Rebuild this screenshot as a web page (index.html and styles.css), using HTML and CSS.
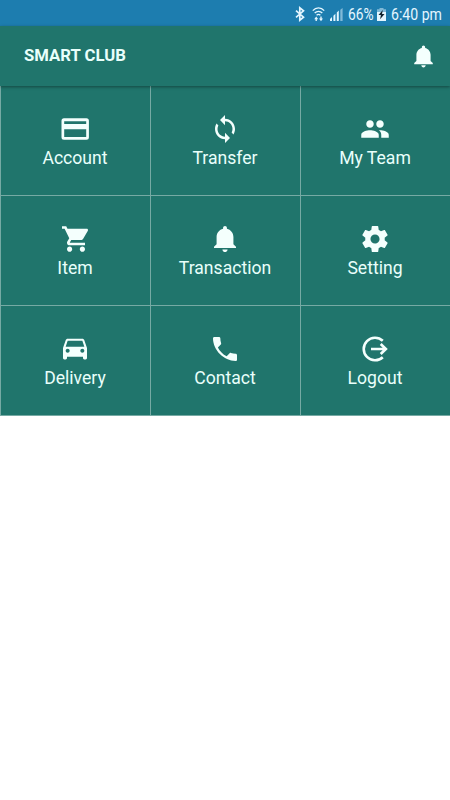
FILE: index.html
```html
<!doctype html>
<html lang="en">
  <head>
    <meta charset="UTF-8" />
    <meta name="viewport" content="width=device-width, initial-scale=1.0" />
    <title>Smart Club</title>
    <link rel="stylesheet" href="styles.css">
  </head>

  <body>
    <!-- Status bar -->
    <div class="status-bar">
      <svg class="bluetooth" width="10" height="16" viewBox="0 0 10 16">
        <path d="M1 4.700l7.500 6.500-3.700 3V1.800l3.700 3-7.500 6.500" />
      </svg>
      <svg class="wifi" width="13" height="15" viewBox="0 0 13 15">
        <path class="line" d="M.8 3.7C4-.1 9-.1 12.2 3.7M2.7 6c2.2-2.3 5.4-2.3 7.6 0M4.6 8.2c1.2-1.1 2.6-1.1 3.8 0" />
        <path d="M2.200 12.200l2-2.600 2 2.600zM7 11.600h4l-2 2.600zM3.500 12h1.400v2H3.500zM8.300 9.600h1.400v2.400H8.300z" />
      </svg>
      <svg class="signal" width="13" height="13" viewBox="0 0 13 13">
        <path d="M0 13v-2l2-2v4zM3.4 13V7.8l2-2V13zM6.8 13V4.6l2-2V13z" />
        <path class="faint" d="M10.3 13V1.8L12.6 0v13z" />
      </svg>
      <span class="battery-level">66%</span>
      <svg class="battery" width="9" height="13" viewBox="0 0 9 13">
        <path class="faint" d="M2.5 0h4v1.3H9V5H0V1.3h2.5z" />
        <path d="M0 4h9v9H0z" />
        <path class="bolt" d="M5.8 2L1.5 7h2.4l-.8 4.2L7.5 6H5z" />
      </svg>
      <span class="time">6:40 pm</span>
    </div>

    <!-- Header -->
    <header class="toolbar">
      <h1 class="title">SMART CLUB</h1>
      <svg class="icon" viewBox="0 0 512 512"><use href="#bell" /></svg>
    </header>

    <!-- Menu -->
    <main class="menu">
      <div class="item">
        <svg class="icon" viewBox="0 0 32 32">
          <path fill-rule="evenodd" d="M5 5.3h22.4a2.5 2.5 0 0 1 2.5 2.5v16.4a2.5 2.5 0 0 1-2.5 2.5H5a2.5 2.5 0 0 1-2.5-2.5V7.800A2.500 2.500 0 0 1 5 5.300zM5.200 8.200v2.800h22V8.200zM5.200 16.200v7.700h22v-7.700z" />
        </svg>
        <span>Account</span>
      </div>
      <div class="item">
        <svg class="icon" viewBox="0 0 512 512">
          <path d="M256 93.09V32l-80 81.454 80 81.456v-61.093c65.996 0 120 54.982 120 122.183 0 20.363-5 39.714-14.004 57.016L391 342.547c15.996-25.457 25-54.988 25-86.547 0-89.599-72.002-162.91-160-162.91zm0 285.094c-66.001 0-120-54.988-120-122.184 0-20.363 5-39.709 13.999-57.02L121 169.454C104.999 193.89 96 224.436 96 256c0 89.599 72.002 162.91 160 162.91V480l80-81.453-80-81.457v61.094z" />
        </svg>
        <span>Transfer</span>
      </div>
      <div class="item">
        <svg class="icon" viewBox="-.8 -.8 25.600 25.600">
          <path d="M16 11c1.660 0 2.990-1.340 2.990-3S17.660 5 16 5s-3 1.340-3 3 1.340 3 3 3zm-8 0c1.660 0 2.990-1.340 2.990-3S9.660 5 8 5 5 6.340 5 8s1.340 3 3 3zm0 2c-2.330 0-7 1.170-7 3.500V19h14v-2.500c0-2.330-4.670-3.500-7-3.500zm8 0c-.29 0-.62.02-.97.05 1.160.84 1.970 1.970 1.970 3.450V19h6v-2.500c0-2.330-4.670-3.500-7-3.500z" />
        </svg>
        <span>My Team</span>
      </div>
      <div class="item">
        <svg class="icon" viewBox="0 0 512 512">
          <path d="M169.6 377.6c-22.882 0-41.6 18.718-41.6 41.601 0 22.882 18.718 41.6 41.6 41.6s41.601-18.718 41.601-41.6c-.001-22.884-18.72-41.601-41.601-41.601zM48 51.2v41.6h41.6l74.883 151.682-31.308 50.954c-3.118 5.2-5.2 12.482-5.2 19.765 0 27.85 19.025 41.6 44.825 41.6H416v-40H177.893c-3.118 0-5.2-2.082-5.2-5.2 0-1.036 2.207-5.2 2.207-5.2l20.782-32.8h154.954c15.601 0 29.128-8.317 36.4-21.836l74.882-128.8c1.237-2.461 2.082-6.246 2.082-10.4 0-11.446-9.364-19.765-20.8-19.765H135.364L115.6 51.2H48zm326.399 326.4c-22.882 0-41.6 18.718-41.6 41.601 0 22.882 18.718 41.6 41.6 41.6S416 442.082 416 419.2c0-22.883-18.719-41.6-41.601-41.6z" />
        </svg>
        <span>Item</span>
      </div>
      <div class="item">
        <svg class="icon" viewBox="0 0 512 512">
          <path id="bell" d="M256 464c22.779 0 41.411-18.719 41.411-41.6h-82.823c0 22.881 18.633 41.6 41.412 41.6zm134.589-124.8V224.8c0-63.44-44.516-117.518-103.53-131.041V79.2c0-17.682-13.457-31.2-31.059-31.2s-31.059 13.518-31.059 31.2v14.559c-59.015 13.523-103.53 67.601-103.53 131.041v114.4L80 380.8v20.8h352v-20.8l-41.411-41.6z" />
        </svg>
        <span>Transaction</span>
      </div>
      <div class="item">
        <svg class="icon" viewBox="-.3 -.3 24.600 24.600">
          <path d="M19.430 12.980c.04-.32.07-.64.07-.98s-.03-.66-.07-.98l2.110-1.650c.19-.15.24-.42.12-.64l-2-3.460c-.12-.22-.39-.3-.61-.22l-2.490 1c-.52-.4-1.080-.73-1.690-.98l-.38-2.650C14.460 2.180 14.250 2 14 2h-4c-.25 0-.46.18-.49.42l-.38 2.650c-.61.25-1.170.59-1.690.98l-2.490-1c-.23-.09-.49 0-.61.22l-2 3.460c-.13.22-.07.49.12.64l2.110 1.650c-.04.32-.07.65-.07.98s.03.66.07.98l-2.110 1.650c-.19.15-.24.42-.12.64l2 3.460c.12.22.39.3.61.22l2.490-1c.52.4 1.080.73 1.690.98l.38 2.650c.03.24.24.42.49.42h4c.25 0 .46-.18.49-.42l.38-2.650c.61-.25 1.170-.59 1.690-.98l2.490 1c.23.09.49 0 .61-.22l2-3.460c.12-.22.07-.49-.12-.64l-2.110-1.650zM12 15.500c-1.930 0-3.500-1.570-3.500-3.500s1.570-3.500 3.500-3.500 3.500 1.570 3.500 3.500-1.570 3.500-3.500 3.500z" />
        </svg>
        <span>Setting</span>
      </div>
      <div class="item">
        <svg class="icon" viewBox="0 .7 24 24">
          <path d="M18.920 6.010C18.720 5.420 18.160 5 17.500 5h-11c-.66 0-1.210.42-1.420 1.010L3 12v7.500c0 .55.45 1 1 1h1c.55 0 1-.45 1-1v-1h12v1c0 .55.45 1 1 1h1c.55 0 1-.45 1-1V12l-2.080-5.990zM6.500 15.500c-.83 0-1.500-.67-1.500-1.500s.67-1.500 1.500-1.500S8 13.170 8 14s-.67 1.500-1.500 1.500zm11 0c-.83 0-1.500-.67-1.500-1.500s.67-1.500 1.500-1.500 1.500.67 1.500 1.500-.67 1.500-1.500 1.500zM5 11l1.500-4.500h11L19 11H5z" />
        </svg>
        <span>Delivery</span>
      </div>
      <div class="item">
        <svg class="icon" viewBox="0 0 512 512">
          <path d="M426.666 330.667a250.385 250.385 0 0 1-75.729-11.729c-7.469-2.136-16-1.073-21.332 5.333l-46.939 46.928c-60.802-30.928-109.864-80-140.802-140.803l46.939-46.927c5.332-5.333 7.462-13.864 5.332-21.333-8.537-24.531-12.802-48.136-12.802-76.803C181.333 73.604 171.734 64 160 64H85.333C73.599 64 64 73.604 64 85.333 64 274.656 237.344 448 426.666 448 438.399 448 448 438.396 448 426.667v-74.667c0-11.729-9.601-21.333-21.334-21.333z" />
        </svg>
        <span>Contact</span>
      </div>
      <div class="item">
        <svg class="icon outline" viewBox="0 0 32 32">
          <path d="M23.800 7.800A11.300 11.300 0 1 0 23.800 24.200M12 16h14.500M21.700 11l5.200 5-5.200 5" />
        </svg>
        <span>Logout</span>
      </div>
    </main>
  </body>
</html>
```

FILE: styles.css
```css
body {
  margin: 0;
  background: #fff;
  color: #e9fffb;
  font-family: Roboto, sans-serif;
}

svg {
  display: block;
  fill: currentColor;
}

.status-bar {
  display: flex;
  align-items: center;
  justify-content: flex-end;
  box-sizing: border-box;
  height: 26px;
  padding: 2px 8px 0 0;
  background: #1d7daf;
  color: #e4f6ff;
  font-size: 16px;
  white-space: nowrap;
}

.bluetooth {
  margin-right: 7px;
  fill: none;
  stroke: currentColor;
  stroke-width: 1.7;
}

.wifi {
  margin-right: 5px;
}

.wifi .line {
  fill: none;
  stroke: currentColor;
  stroke-width: 1.3;
}

.signal {
  margin-right: 5px;
}

.faint {
  opacity: 0.5;
}

.battery-level {
  width: 26px;
  margin-right: 3px;
  transform: scaleX(0.86);
  transform-origin: left;
}

.battery {
  margin-right: 5px;
}

.bolt {
  fill: #10222d;
}

.time {
  width: 51px;
  transform: scaleX(0.88);
  transform-origin: left;
}

.toolbar {
  position: relative;
  display: flex;
  align-items: center;
  justify-content: space-between;
  box-sizing: border-box;
  height: 60px;
  padding: 0 13px 0 24px;
  background: #20756c;
  box-shadow: 0 1px 3px rgba(0, 0, 0, 0.4);
}

.title {
  margin: 0;
  padding-bottom: 2px;
  font-size: 16.7px;
  font-weight: bold;
}

.icon {
  width: 32px;
  height: 32px;
  color: #f4fffd;
}

.toolbar .icon {
  width: 27px;
  height: 27px;
}

.outline {
  fill: none;
  stroke: currentColor;
  stroke-width: 2.6;
}

.menu {
  display: grid;
  grid-template-columns: repeat(3, 150px);
  grid-auto-rows: 110px;
}

.item {
  display: flex;
  flex-direction: column;
  align-items: center;
  box-sizing: border-box;
  padding: 27px 1px 0 0;
  border-left: 1px solid #76aaa4;
  border-bottom: 1px solid #76aaa4;
  background: #20756c;
  font-size: 17.6px;
  line-height: 26px;
}
```
